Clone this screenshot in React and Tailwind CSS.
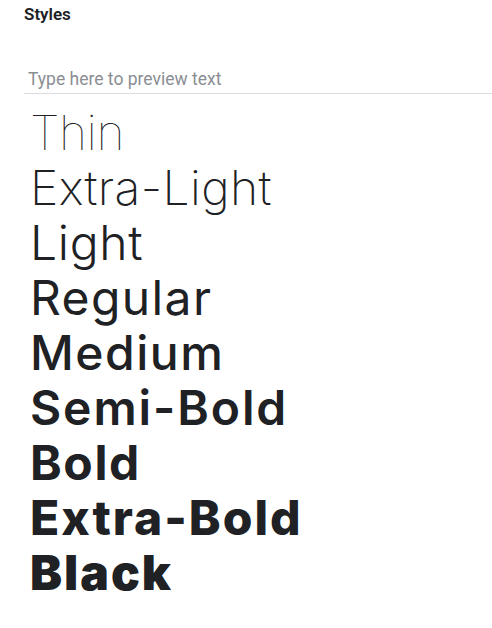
export default function App() {
    const styles = [
        { name: "Thin", cls: "font-thin tracking-[-0.5px]" },
        { name: "Extra-Light", cls: "font-extralight tracking-[0.4px]" },
        { name: "Light", cls: "font-light tracking-[0.7px]" },
        { name: "Regular", cls: "font-normal tracking-[1.4px]" },
        { name: "Medium", cls: "font-medium tracking-[1.5px]" },
        { name: "Semi-Bold", cls: "font-semibold tracking-[1.9px]" },
        { name: "Bold", cls: "font-bold tracking-[1.6px]" },
        { name: "Extra-Bold", cls: "font-extrabold tracking-[2px]" },
        { name: "Black", cls: "font-black tracking-[2px]" },
    ];

    return (
        <div className="min-h-screen w-[492px] bg-white text-[#202124] antialiased">
            {/* Header */}
            <h2 className="pl-[24px] pt-[4px] text-[17px] font-semibold font-['Roboto',sans-serif] leading-[20px]">Styles</h2>

            {/* Preview input */}
            <div className="ml-[24px] mt-[42px] border-b border-[#dadce0] pb-[1px] pl-[4px]">
                <input
                    placeholder="Type here to preview text"
                    className="w-full text-[17.5px] font-['Roboto',sans-serif] outline-none placeholder:text-[#8a8e93]"
                />
            </div>

            {/* Weights */}
            <div className="pl-[30px] pt-[11px] font-['Inter',sans-serif] text-[48px] leading-[55px] text-[#202124]">
                {styles.map((s) => (
                    <div key={s.name} className={s.cls}>{s.name}</div>
                ))}
            </div>
        </div>
    );
}
